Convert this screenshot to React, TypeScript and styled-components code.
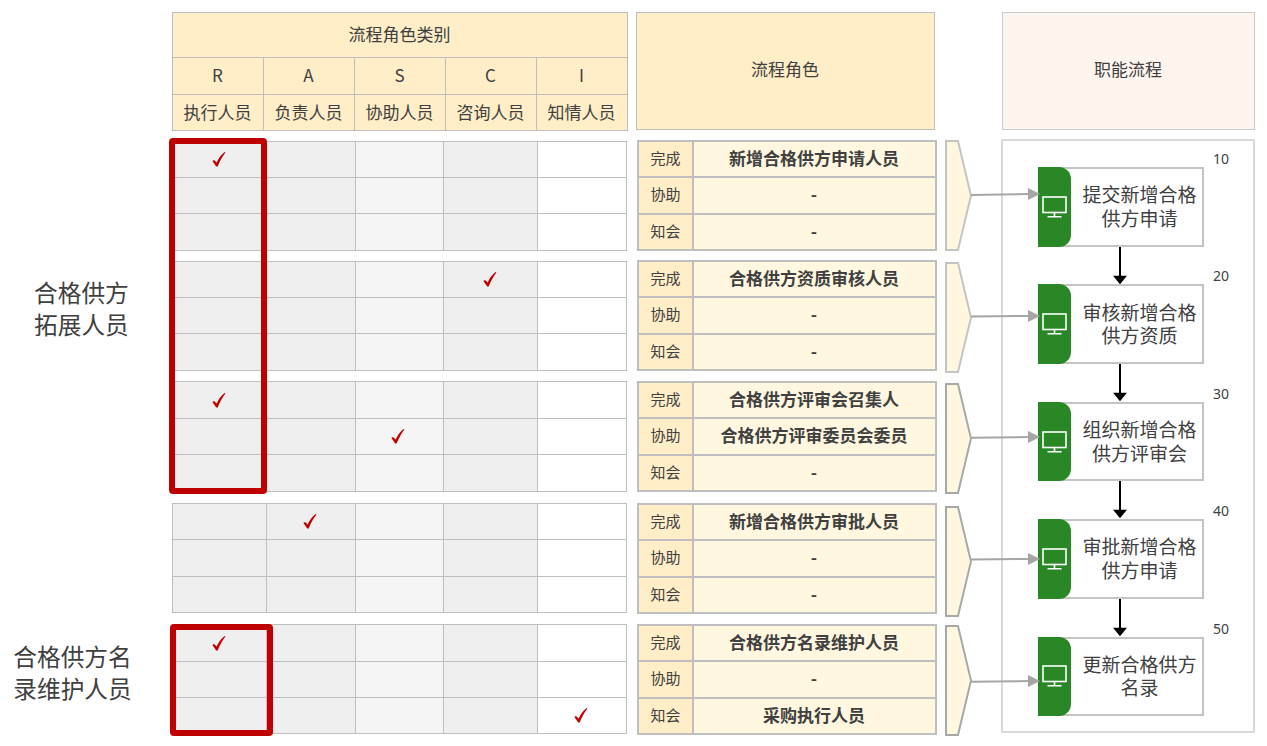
import styled, { createGlobalStyle } from "styled-components";

const GlobalStyle = createGlobalStyle`
  html, body {
    margin: 0;
    padding: 0;
    background: #fff;
  }
  * {
    box-sizing: border-box;
  }
`;

const letters = [
  { code: "R", name: "执行人员" },
  { code: "A", name: "负责人员" },
  { code: "S", name: "协助人员" },
  { code: "C", name: "咨询人员" },
  { code: "I", name: "知情人员" },
];

const cellColors = ["#efefef", "#efefef", "#f5f5f5", "#efefef", "#ffffff"];
const checkNudge = [-2, -3, -4, -2, -2];

// checks: [row, column]
const groups = [
  { rows: "35px 35px 36px", top: 10, checks: [[0, 0]] },
  { rows: "35px 35px 36px", top: 10, checks: [[0, 3]] },
  { rows: "36px 35px 36px", top: 10, checks: [[0, 0], [1, 2]] },
  { rows: "35px 36px 35px", top: 11, checks: [[0, 1]] },
  { rows: "36px 35px 35px", top: 11, checks: [[0, 0], [2, 4]] },
];

const roles = [
  { top: 10, done: "新增合格供方申请人员", help: "-", notice: "-" },
  { top: 9, done: "合格供方资质审核人员", help: "-", notice: "-" },
  { top: 10, done: "合格供方评审会召集人", help: "合格供方评审委员会委员", notice: "-" },
  { top: 11, done: "新增合格供方审批人员", help: "-", notice: "-" },
  { top: 10, done: "合格供方名录维护人员", help: "-", notice: "采购执行人员" },
];

const chevrons = [
  { top: 0, stroke: "#c4c4c4" },
  { top: 11, stroke: "#c4c4c4" },
  { top: 10, stroke: "#a8a8a8" },
  { top: 12, stroke: "#a8a8a8" },
  { top: 8, stroke: "#a8a8a8" },
];

const steps = [
  { no: "10", lines: ["提交新增合格", "供方申请"] },
  { no: "20", lines: ["审核新增合格", "供方资质"] },
  { no: "30", lines: ["组织新增合格", "供方评审会"] },
  { no: "40", lines: ["审批新增合格", "供方申请"] },
  { no: "50", lines: ["更新合格供方", "名录"] },
];

const links = [
  [971, 195, 194],
  [971, 316.5, 316],
  [971, 437.7, 437],
  [971, 559.5, 559],
  [971, 681.7, 681],
];

const Check = ({ nudge }: { nudge: number }) => (
  <CheckIcon $nudge={nudge} viewBox="0 0 14 15" aria-hidden="true">
    <path d="M0.4 9 L2 7.9 L4.7 10.4 C6.4 6.4 9 3 12.6 0 L13.4 0.6 C10.2 4.8 7.6 9.6 5.7 14.6 L4.2 14.6 Z" />
  </CheckIcon>
);

const Monitor = () => (
  <MonitorIcon viewBox="0 0 25 22" aria-hidden="true">
    <rect x="1" y="1" width="23" height="15.5" />
    <path d="M12.5 17 V20.5 M5.5 20.8 H19.5" />
  </MonitorIcon>
);

const App = () => {
  return (
    <Page>
      <GlobalStyle />

      <LabelCol>
        <PersonLabel $top={264} $left={34}>
          合格供方
          <br />
          拓展人员
        </PersonLabel>
        <PersonLabel $top={300} $left={13} $center>
          合格供方名
          <br />
          录维护人员
        </PersonLabel>
      </LabelCol>

      <MatrixCol>
        <HeadTable>
          <HeadTitle>流程角色类别</HeadTitle>
          {letters.map((l) => (
            <HeadCode key={l.code}>{l.code}</HeadCode>
          ))}
          {letters.map((l) => (
            <HeadName key={l.name}>{l.name}</HeadName>
          ))}
        </HeadTable>

        {groups.map((g, i) => (
          <MatrixGroup key={i} $rows={g.rows} $top={g.top}>
            {[0, 1, 2].map((r) =>
              cellColors.map((color, c) => (
                <MatrixCell key={`${r}-${c}`} $bg={color}>
                  {g.checks.some(([cr, cc]) => cr === r && cc === c) && (
                    <Check nudge={checkNudge[c]} />
                  )}
                </MatrixCell>
              ))
            )}
          </MatrixGroup>
        ))}
      </MatrixCol>

      <RoleCol>
        <RoleHead>流程角色</RoleHead>
        {roles.map((r, i) => (
          <RoleTable key={i} $top={r.top}>
            <RoleLabel>完成</RoleLabel>
            <RoleValue>{r.done}</RoleValue>
            <RoleLabel>协助</RoleLabel>
            <RoleValue>{r.help}</RoleValue>
            <RoleLabel>知会</RoleLabel>
            <RoleValue>{r.notice}</RoleValue>
          </RoleTable>
        ))}
      </RoleCol>

      <ChevronCol>
        {chevrons.map((c, i) => (
          <Chevron key={i} $top={c.top} viewBox="0 0 27 111" aria-hidden="true">
            <polygon
              points="1,1 13,1 26,55.5 13,110 1,110"
              fill="#fff7e0"
              stroke={c.stroke}
              strokeWidth="2"
            />
          </Chevron>
        ))}
      </ChevronCol>

      <FlowCol>
        <FlowHead>职能流程</FlowHead>
        <FlowPanel>
          {steps.map((s, i) => (
            <Step key={s.no}>
              <Node>
                <NodeBand>
                  <Monitor />
                </NodeBand>
                <NodeText>
                  {s.lines[0]}
                  <br />
                  {s.lines[1]}
                </NodeText>
                <StepNo>{s.no}</StepNo>
              </Node>
              {i < steps.length - 1 && (
                <DownArrow viewBox="0 0 16 38" aria-hidden="true">
                  <path d="M8 0 V30" stroke="#000" strokeWidth="2" fill="none" />
                  <polygon points="1,29 15,29 8,37.5" fill="#000" />
                </DownArrow>
              )}
            </Step>
          ))}
        </FlowPanel>
      </FlowCol>

      <Highlight $left={169} $top={138} $width={98} $height={356} />
      <Highlight $left={170} $top={624} $width={103} $height={112} />

      <LinkLayer viewBox="0 0 1267 746" aria-hidden="true">
        {links.map(([x, y1, y2]) => (
          <g key={y1}>
            <line x1={x} y1={y1} x2={1030} y2={y2} stroke="#a6a6a6" strokeWidth="2" />
            <polygon
              points={`1028,${y2 - 6} 1040,${y2} 1028,${y2 + 6}`}
              fill="#a6a6a6"
            />
          </g>
        ))}
      </LinkLayer>
    </Page>
  );
};

export default App;

const Page = styled.div`
  position: relative;
  width: 1267px;
  height: 746px;
  padding-top: 12px;
  display: flex;
  align-items: flex-start;
  overflow: hidden;
  background: #fff;
  color: #404040;
  font-family: "Noto Sans CJK SC", "Noto Sans", sans-serif;
  font-size: 17px;
`;

const LabelCol = styled.div`
  width: 172px;
  flex: none;
`;

const PersonLabel = styled.div<{ $top: number; $left: number; $center?: boolean }>`
  margin-top: ${(p) => p.$top}px;
  margin-left: ${(p) => p.$left}px;
  width: 119px;
  font-size: 23.7px;
  line-height: 32px;
  white-space: nowrap;
  text-align: ${(p) => (p.$center ? "center" : "left")};
`;

const MatrixCol = styled.div`
  width: 456px;
  flex: none;
`;

const HeadTable = styled.div`
  display: grid;
  grid-template-columns: repeat(5, 90px);
  grid-template-rows: 44px 36px 35px;
  gap: 1px;
  border: 1px solid #bfbfbf;
  background: #bfbfbf;
`;

const HeadCell = styled.div`
  display: flex;
  align-items: center;
  justify-content: center;
  padding-right: 1px;
  background: #ffeec8;
  white-space: nowrap;
`;

const HeadTitle = styled(HeadCell)`
  grid-column: 1 / -1;
  padding-bottom: 4px;
`;

const HeadCode = styled(HeadCell)`
  padding-bottom: 4px;
`;

const HeadName = styled(HeadCell)`
  padding-bottom: 2px;
`;

const MatrixGroup = styled.div<{ $rows: string; $top: number }>`
  width: 455px;
  margin-top: ${(p) => p.$top}px;
  display: grid;
  grid-template-columns: 93px 88px 87px 93px 88px;
  grid-template-rows: ${(p) => p.$rows};
  gap: 1px;
  border: 1px solid #bfbfbf;
  background: #bfbfbf;
`;

const MatrixCell = styled.div<{ $bg: string }>`
  display: flex;
  align-items: center;
  justify-content: center;
  background: ${(p) => p.$bg};
`;

const CheckIcon = styled.svg<{ $nudge: number }>`
  width: 14px;
  height: 15px;
  margin-left: ${(p) => p.$nudge}px;
  fill: #c00000;
`;

const RoleCol = styled.div`
  width: 301px;
  margin-left: 8px;
  flex: none;
`;

const RoleHead = styled.div`
  width: 299px;
  height: 118px;
  padding: 0 1px 6px 0;
  display: flex;
  align-items: center;
  justify-content: center;
  background: #ffeec8;
  border: 1px solid #bfbfbf;
`;

const RoleTable = styled.div<{ $top: number }>`
  width: 300px;
  height: 111px;
  margin-top: ${(p) => p.$top}px;
  margin-left: 1px;
  display: grid;
  grid-template-columns: 53px 1fr;
  grid-template-rows: 34px 35px 34px;
  gap: 2px;
  border: 2px solid #bfbfbf;
  background: #bfbfbf;
`;

const RoleLabel = styled.div`
  display: flex;
  align-items: center;
  justify-content: center;
  padding-bottom: 4px;
  background: #ffeec8;
  font-size: 15px;
`;

const RoleValue = styled.div`
  display: flex;
  align-items: center;
  justify-content: center;
  padding: 0 1px 4px 0;
  background: #fff7e0;
  font-weight: 700;
  white-space: nowrap;
`;

const ChevronCol = styled.div`
  width: 27px;
  margin-left: 8px;
  padding-top: 128px;
  flex: none;
`;

const Chevron = styled.svg<{ $top: number }>`
  display: block;
  width: 27px;
  height: 111px;
  margin-top: ${(p) => p.$top}px;
`;

const FlowCol = styled.div`
  width: 254px;
  margin-left: 29px;
  flex: none;
`;

const FlowHead = styled.div`
  width: 253px;
  height: 118px;
  margin-left: 1px;
  padding: 0 1px 6px 0;
  display: flex;
  align-items: center;
  justify-content: center;
  background: #fff5ef;
  border: 1px solid #c9c9c9;
`;

const FlowPanel = styled.div`
  height: 594px;
  margin-top: 9px;
  padding: 26px 0 0 35px;
  border: 2px solid #d9d9d9;
  display: flex;
  flex-direction: column;
`;

const Step = styled.div`
  width: 166px;
  display: flex;
  flex-direction: column;
  align-items: center;
`;

const Node = styled.div`
  position: relative;
  width: 166px;
  height: 79.6px;
  display: flex;
  background: #fff;
  border: 2px solid #c4c4c4;
  border-left: none;
`;

const NodeBand = styled.div`
  width: 33px;
  flex: none;
  margin: -2px 0;
  display: flex;
  align-items: center;
  justify-content: flex-end;
  padding-right: 4px;
  background: #2a8725;
  border-radius: 0 12px 12px 0;
`;

const MonitorIcon = styled.svg`
  width: 25px;
  height: 22px;
  fill: none;
  stroke: #fff;
  stroke-width: 1.6;
`;

const NodeText = styled.div`
  flex: 1;
  padding: 0 0 2px 6px;
  display: flex;
  align-items: center;
  justify-content: center;
  text-align: center;
  font-size: 19px;
  line-height: 23.5px;
  white-space: nowrap;
`;

const StepNo = styled.div`
  position: absolute;
  left: 175px;
  top: -19px;
  font-family: "Noto Sans", sans-serif;
  font-size: 14px;
  line-height: 18px;
`;

const DownArrow = styled.svg`
  display: block;
  width: 16px;
  height: 37.8px;
  margin-right: 2px;
`;

const Highlight = styled.div<{ $left: number; $top: number; $width: number; $height: number }>`
  position: absolute;
  left: ${(p) => p.$left}px;
  top: ${(p) => p.$top}px;
  width: ${(p) => p.$width}px;
  height: ${(p) => p.$height}px;
  border: 6px solid #c00000;
  border-radius: 4px;
`;

const LinkLayer = styled.svg`
  position: absolute;
  left: 0;
  top: 0;
  width: 1267px;
  height: 746px;
  pointer-events: none;
`;
